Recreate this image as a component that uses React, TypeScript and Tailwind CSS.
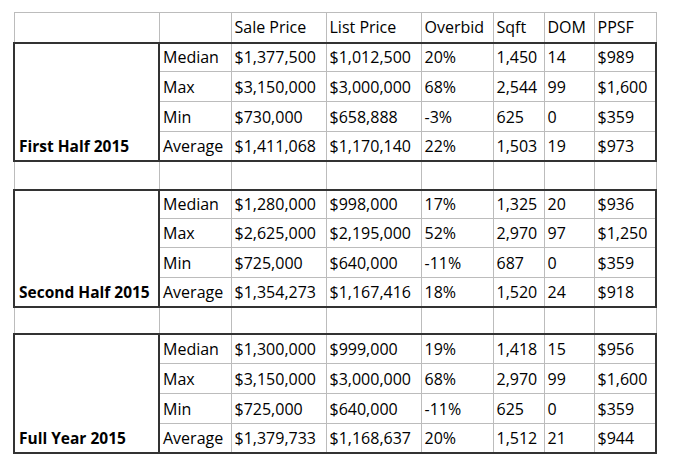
const headers = ["", "", "Sale Price", "List Price", "Overbid", "Sqft", "DOM", "PPSF"];

const sections = [
  {
    label: "First Half 2015",
    heights: [29, 30, 30, 29],
    spacer: 29,
    rows: [
      ["Median", "$1,377,500", "$1,012,500", "20%", "1,450", "14", "$989"],
      ["Max", "$3,150,000", "$3,000,000", "68%", "2,544", "99", "$1,600"],
      ["Min", "$730,000", "$658,888", "-3%", "625", "0", "$359"],
      ["Average", "$1,411,068", "$1,170,140", "22%", "1,503", "19", "$973"],
    ],
  },
  {
    label: "Second Half 2015",
    heights: [29, 29, 30, 29],
    spacer: 27,
    rows: [
      ["Median", "$1,280,000", "$998,000", "17%", "1,325", "20", "$936"],
      ["Max", "$2,625,000", "$2,195,000", "52%", "2,970", "97", "$1,250"],
      ["Min", "$725,000", "$640,000", "-11%", "687", "0", "$359"],
      ["Average", "$1,354,273", "$1,167,416", "18%", "1,520", "24", "$918"],
    ],
  },
  {
    label: "Full Year 2015",
    heights: [30, 30, 30, 29],
    spacer: 0,
    rows: [
      ["Median", "$1,300,000", "$999,000", "19%", "1,418", "15", "$956"],
      ["Max", "$3,150,000", "$3,000,000", "68%", "2,970", "99", "$1,600"],
      ["Min", "$725,000", "$640,000", "-11%", "625", "0", "$359"],
      ["Average", "$1,379,733", "$1,168,637", "20%", "1,512", "21", "$944"],
    ],
  },
];

const widths = [145, 72, 95, 95, 72, 51, 50, 62];

const cell = "border border-[#bcbcbc] pl-[3px] pr-0 py-0 align-middle whitespace-nowrap overflow-visible";

export default function App() {
  return (
    <div className="w-[676px] h-[462px] bg-white pl-[13px] pt-[12px] text-black text-[16px] leading-[20px] [font-family:'Open_Sans',sans-serif]">
      <table className="border-collapse table-fixed w-[642px]">
        <colgroup>
          {widths.map((w, i) => (
            <col key={i} style={{ width: w }} />
          ))}
        </colgroup>
        <tbody>
          <tr className="h-[30px]">
            {headers.map((h, i) => (
              <td key={i} className={cell}>
                {h}
              </td>
            ))}
          </tr>
        </tbody>
        {sections.map((s) => (
          <>
            <tbody key={s.label} className="border-2 border-[#333333]">
              {s.rows.map((r, ri) => (
                <tr key={ri} style={{ height: s.heights[ri] }}>
                  {ri === 0 && (
                    <td
                      rowSpan={4}
                      className="border-2 border-[#333333] pl-[4px] pb-[4px] align-bottom font-bold text-[15.5px] whitespace-nowrap"
                    >
                      {s.label}
                    </td>
                  )}
                  {r.map((v, ci) => (
                    <td key={ci} className={cell}>
                      {v}
                    </td>
                  ))}
                </tr>
              ))}
            </tbody>
            {s.spacer > 0 && (
              <tbody key={s.label + "-gap"}>
                <tr style={{ height: s.spacer }}>
                  {headers.map((_, i) => (
                    <td key={i} className={cell}></td>
                  ))}
                </tr>
              </tbody>
            )}
          </>
        ))}
      </table>
    </div>
  );
}
